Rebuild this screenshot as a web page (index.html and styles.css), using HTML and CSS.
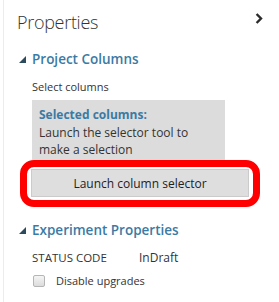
FILE: index.html
```html
<!DOCTYPE html>
<html lang="en">
<head>
  <meta charset="UTF-8" />
  <title>Properties</title>
  <link rel="stylesheet" href="styles.css">
</head>
<body>
  <div class="panel">
    <div class="panel-head">
      <h1>Properties</h1>
      <span class="collapse">
        <svg width="8" height="11" viewBox="0 0 8 11"><path d="M1.6 1 L6 5.5 L1.6 10" fill="none" stroke="#2b2b2b" stroke-width="2.4"/></svg>
      </span>
    </div>

    <section class="group">
      <h2><span class="tri"></span>Project Columns</h2>
      <div class="field-label">Select columns</div>
      <div class="selected-box">
        <div class="selected-title">Selected columns:</div>
        <div>Launch the selector tool to make a selection</div>
      </div>
      <div class="highlight">
        <button class="launch">Launch column selector</button>
      </div>
    </section>

    <section class="group">
      <h2><span class="tri"></span>Experiment Properties</h2>
      <div class="prop-row">
        <span class="prop-name">STATUS CODE</span>
        <span class="prop-value">InDraft</span>
      </div>
      <label class="check"><span class="box"></span>Disable upgrades</label>
    </section>
  </div>
</body>
</html>
```

FILE: styles.css
```css
* {
  box-sizing: border-box;
}
body {
  margin: 0;
  background: #fff;
  font-family: 'Open Sans', 'Noto Sans', sans-serif;
  color: #333;
}
.panel {
  height: 302px;
  margin-left: 3px;
  border-left: 1px solid #ececec;
  padding: 10px 0 0 15px;
}
.panel-head {
  display: flex;
  justify-content: space-between;
  align-items: flex-start;
  height: 31px;
}
h1 {
  margin: 0 0 0 -2px;
  font-size: 18px;
  font-weight: 300;
  line-height: 24px;
  letter-spacing: -0.3px;
  color: #333;
}
.collapse {
  margin: 3px 16px 0 0;
  line-height: 0;
}
.group {
  margin-top: 8px;
}
.group + .group {
  margin-top: 13px;
}
h2 {
  margin: 0;
  display: flex;
  align-items: center;
  font-size: 13.5px;
  font-weight: 600;
  color: #3b7aa4;
  line-height: 20px;
}
.tri {
  width: 0;
  height: 0;
  border-left: 7px solid transparent;
  border-bottom: 7px solid #2b4a5c;
  margin: 0 6px 0 0;
}
.field-label {
  font-size: 11px;
  line-height: 15px;
  margin: 10px 0 0 13px;
}
.selected-box {
  width: 193px;
  margin: 6px 0 0 13px;
  padding: 6px 7px 1.5px;
  background: #dcdcdc;
  font-size: 12px;
  line-height: 17.5px;
}
.selected-title {
  font-weight: 700;
  color: #3b7aa4;
}
.highlight {
  width: 240px;
  margin-left: 1px;
  border: 7px solid #f00;
  border-radius: 14px;
  padding: 2px 4px 3px;
}
.launch {
  display: block;
  width: 100%;
  height: 28px;
  padding: 0;
  background: #dedede;
  border: 1px solid #cbcbcb;
  font-family: inherit;
  font-size: 12px;
  color: #222;
}
.prop-row {
  display: flex;
  align-items: baseline;
  margin: 10px 0 0 13px;
  font-size: 11.5px;
  line-height: 15px;
}
.prop-name {
  width: 107px;
}
.prop-value {
  font-size: 12px;
}
.check {
  display: flex;
  align-items: center;
  margin: 8px 0 0 14px;
  font-size: 11px;
  line-height: 15px;
}
.box {
  width: 12px;
  height: 12px;
  margin-right: 11px;
  border: 1px solid #b5b5b5;
  border-radius: 2px;
  background: linear-gradient(#f5f5f5, #dcdcdc);
}
```
